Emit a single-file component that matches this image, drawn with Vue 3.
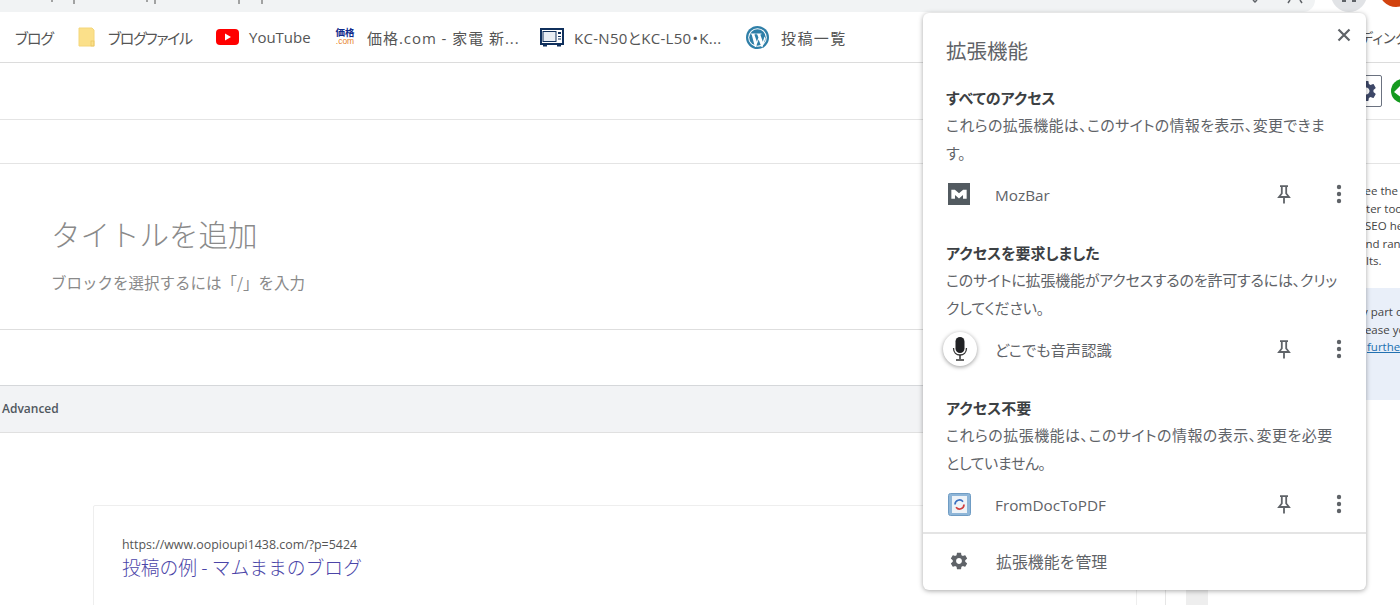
<script setup>
const bookmarks = [
  { label: 'ブログ', kind: 'none', width: 38, ls: -1.2, before: 0, gap: 11 },
  { label: 'ブログファイル', kind: 'file', width: 85, ls: -1.4, before: 25, gap: 12 },
  { label: 'YouTube', kind: 'yt', width: 62, ls: 0, before: 23, gap: 10 },
  { label: '価格.com - 家電 新...', kind: 'kakaku', width: 151, ls: 0.95, before: 23, gap: 11 },
  { label: 'KC-N50とKC-L50・K...', kind: 'oven', width: 150, ls: 0.3, before: 22, gap: 10 },
  { label: '投稿一覧', kind: 'wp', width: 65, ls: 1.4, before: 22, gap: 12 }
]
const sidebarLines = ['see the a', 'nter tool', '. SEO help', 'and rank', 'ults.']
const sections = [
  { title: 'すべてのアクセス', lines: [{ t: 'これらの拡張機能は、このサイトの情報を表示、変更できま', ls: 0.3 }, { t: 'す。', ls: 0 }], name: 'MozBar', kind: 'moz' },
  { title: 'アクセスを要求しました', lines: [{ t: 'このサイトに拡張機能がアクセスするのを許可するには、クリッ', ls: -0.2 }, { t: 'クしてください。', ls: -0.2 }], name: 'どこでも音声認識', kind: 'mic' },
  { title: 'アクセス不要', lines: [{ t: 'これらの拡張機能は、このサイトの情報の表示、変更を必要', ls: 0.45 }, { t: 'としていません。', ls: -0.4 }], name: 'FromDocToPDF', kind: 'pdf' }
]
</script>

<template>
  <div class="page">
    <div class="topstrip">
      <div class="omnibox">
        <svg class="frags" width="1320" height="6" viewBox="0 0 1320 6">
          <path d="M52 0v2M74 0v4M147 0v2M155 0v4M239 0v4M262 0v4" stroke="#777" stroke-width="1.300" />
          <path d="M1253 0l2 2 2-2M1290 0l-2 3M1300 0l2 3" fill="none" stroke="#5f6368" stroke-width="1.500" />
        </svg>
      </div>
      <div class="ext-btn"><i></i><i></i></div>
      <div class="avatar"></div>
    </div>
    <div class="bookmarks">
      <div v-for="b in bookmarks" :key="b.label" class="bm" :style="{ marginLeft: b.before + 'px', gap: b.gap + 'px' }">
        <svg v-if="b.kind === 'file'" class="bmi" width="18" height="20" viewBox="0 0 18 20">
          <path d="M1 1h13l2 2v16H1z" fill="#fbe08a" stroke="#f4d67a" />
          <rect x="13" y="14" width="3" height="5" fill="none" stroke="#e8c460" stroke-width=".7" />
        </svg>
        <svg v-else-if="b.kind === 'yt'" class="bmi" width="23" height="16" viewBox="0 0 23 16">
          <rect width="23" height="16" rx="4" fill="#f00" />
          <path d="M9 4.600 15 8 9 11.400z" fill="#fff" />
        </svg>
        <span v-else-if="b.kind === 'kakaku'" class="kakaku"><b>価格</b><i>.com</i></span>
        <svg v-else-if="b.kind === 'oven'" class="bmi" width="24" height="19" viewBox="0 0 24 19">
          <rect x="1" y="1" width="22" height="15" fill="#fff" stroke="#10305c" stroke-width="2" />
          <rect x="3" y="3.500" width="13" height="10" fill="#e8edf3" stroke="#10305c" />
          <path d="M18 4h3v2h-3zM18 8h3v1h-3zM18 10.500h3v1h-3z" fill="#10305c" />
          <path d="M3 17h4v1.500H3zM17 17h4v1.500h-4z" fill="#10305c" />
        </svg>
        <svg v-else-if="b.kind === 'wp'" class="bmi" width="23" height="23" viewBox="0 0 23 23">
          <circle cx="11.500" cy="11.500" r="11.500" fill="#2f7fa8" />
          <circle cx="11.500" cy="11.500" r="9.300" fill="#fff" />
          <circle cx="11.500" cy="11.500" r="8.300" fill="#2f7fa8" />
          <path d="M4.500 7.500h5.200v.7l-1.300.3 2.500 7.300 1.500-4.400-1.100-2.900-1-.3v-.7h5.200v.7l-1.200.3 2.500 7.200 1.700-5.200 1 1.500-3 9-1 .1-2.900-7.700-2.700 7.700-1 0L5.700 8.500l-1.200-.3z" fill="#fff" />
        </svg>
        <span class="bm-label" :style="{ width: b.width + 'px', letterSpacing: b.ls + 'px' }">{{ b.label }}</span>
      </div>
      <div class="bm-more">ディング</div>
    </div>

    <div class="rows">
      <div class="row row-a">
        <div class="toolbox">
          <svg width="24" height="24" viewBox="0 0 24 24">
            <path fill="#3e4868" fill-rule="evenodd" d="M19.430 12.980c.04-.32.070-.64.070-.98s-.03-.66-.07-.98l2.110-1.650c.19-.15.240-.42.120-.64l-2-3.460c-.12-.22-.39-.3-.61-.22l-2.490 1c-.52-.4-1.080-.73-1.690-.98l-.38-2.650C14.460 2.180 14.250 2 14 2h-4c-.25 0-.46.18-.49.420l-.38 2.650c-.61.25-1.170.59-1.690.98l-2.490-1c-.23-.09-.49 0-.61.22l-2 3.460c-.13.220-.07.490.12.640l2.110 1.650c-.04.320-.07.650-.07.980s.03.660.07.980l-2.110 1.650c-.19.150-.24.420-.12.640l2 3.460c.12.220.39.300.61.220l2.490-1c.52.400 1.080.730 1.690.980l.38 2.650c.03.240.24.420.49.420h4c.25 0 .46-.18.49-.42l.38-2.650c.61-.25 1.170-.59 1.690-.98l2.490 1c.23.090.49 0 .61-.22l2-3.460c.12-.22.07-.49-.12-.64l-2.110-1.650zM12 15.500c-1.930 0-3.500-1.570-3.500-3.500s1.570-3.500 3.500-3.500 3.500 1.570 3.500 3.500-1.570 3.500-3.500 3.500z" />
          </svg>
        </div>
        <span class="green"><svg width="24" height="24" viewBox="0 0 24 24"><path d="M3 13 11 5v6h6v4h-6v4z" fill="#fff" /></svg></span>
      </div>
      <div class="row row-b"></div>
    </div>

    <div class="main">
      <div class="editor">
        <div class="title-area">
          <div class="title">タイトルを追加</div>
          <div class="hint">ブロックを選択するには「/」を入力</div>
        </div>
        <div class="spacer"></div>
        <div class="advanced">Advanced</div>
        <div class="preview-wrap">
          <div class="card">
            <div class="url">https://www.oopioupi1438.com/?p=5424</div>
            <div class="link">投稿の例 - マムままのブログ</div>
          </div>
        </div>
      </div>
      <aside class="side">
        <div class="side-text">
          <div v-for="l in sidebarLines" :key="l">{{ l }}</div>
        </div>
        <div class="notice">
          <div>y part of</div>
          <div>lease you</div>
          <div><span class="further">further</span></div>
        </div>
        <div class="scroll"></div>
      </aside>
    </div>

    <div class="popup">
      <svg class="close" width="14" height="14" viewBox="0 0 14 14">
        <path d="M1.500 1.500l11 11M12.500 1.500l-11 11" stroke="#5f6368" stroke-width="2.200" />
      </svg>
      <div class="pop-title">拡張機能</div>
      <section v-for="s in sections" :key="s.title" class="sec">
        <div class="sec-title">{{ s.title }}</div>
        <div v-for="l in s.lines" :key="l.t" class="sec-desc" :style="{ letterSpacing: l.ls + 'px' }">{{ l.t }}</div>
        <div class="ext">
          <span class="ext-icon">
            <svg v-if="s.kind === 'moz'" class="ico" width="22" height="22" viewBox="0 0 23 23">
              <rect width="23" height="23" fill="#525a60" />
              <path d="M3.500 16.500V7h3.700l4.300 3.800L15.800 7h3.700v9.500h-3.800v-3.900l-4.200 3.500-4.200-3.500v3.900z" fill="#fff" />
            </svg>
            <span v-else-if="s.kind === 'mic'" class="mic">
              <svg width="16" height="26" viewBox="0 0 16 26">
                <rect x="3.500" y="1" width="9" height="16" rx="4.500" fill="#202124" />
                <path d="M1.500 12c0 4.500 3 7 6.500 7s6.500-2.500 6.500-7" fill="none" stroke="#333" stroke-width="1.300" />
                <path d="M8 19v4M4 24h8" stroke="#333" stroke-width="1.500" />
              </svg>
            </span>
            <svg v-else class="ico" width="23" height="23" viewBox="0 0 23 23">
              <rect x=".5" y=".5" width="22" height="22" rx="2" fill="#8fb6d8" stroke="#6f9cc4" />
              <rect x="4" y="3" width="15" height="17" fill="#eef3f8" />
              <path d="M7 11.500a4.500 4.500 0 0 1 8-2.800" fill="none" stroke="#3b6fc0" stroke-width="1.700" />
              <path d="M16 11.500a4.500 4.500 0 0 1-8 2.800" fill="none" stroke="#d23c3c" stroke-width="1.700" />
            </svg>
          </span>
          <span class="ext-name" :class="{ latin: s.kind !== 'mic' }">{{ s.name }}</span>
          <svg class="pin" width="14" height="19" viewBox="0 0 14 19">
            <path d="M3 1.200h8M4.800 1.200v7.300L2 12h10L9.200 8.500V1.200M7 12v6.500" fill="none" stroke="#5f6368" stroke-width="1.800" />
          </svg>
          <svg class="more" width="6" height="20" viewBox="0 0 6 20">
            <circle cx="3" cy="3" r="2.200" fill="#5f6368" /><circle cx="3" cy="10" r="2.200" fill="#5f6368" /><circle cx="3" cy="17" r="2.200" fill="#5f6368" />
          </svg>
        </div>
      </section>
      <div class="manage">
        <span class="ext-icon">
          <svg width="20" height="20" viewBox="0 0 24 24">
            <path fill="#5f6368" d="M19.430 12.980c.04-.32.070-.64.070-.98s-.03-.66-.07-.98l2.110-1.650c.19-.15.240-.42.120-.64l-2-3.460c-.12-.22-.39-.3-.61-.22l-2.490 1c-.52-.4-1.080-.73-1.690-.98l-.38-2.650C14.460 2.180 14.250 2 14 2h-4c-.25 0-.46.18-.49.420l-.38 2.650c-.61.25-1.170.59-1.690.98l-2.490-1c-.23-.09-.49 0-.61.22l-2 3.460c-.13.220-.07.490.12.640l2.110 1.650c-.04.320-.07.650-.07.980s.03.660.07.980l-2.110 1.650c-.19.150-.24.420-.12.640l2 3.460c.12.220.39.300.61.220l2.490-1c.52.400 1.080.730 1.690.980l.38 2.650c.03.240.24.420.49.420h4c.25 0 .46-.18.49-.42l.38-2.650c.61-.25 1.170-.59 1.690-.98l2.490 1c.23.090.49 0 .61-.22l2-3.460c.12-.22.07-.49-.12-.64l-2.110-1.650zM12 15.500c-1.930 0-3.500-1.570-3.500-3.500s1.570-3.500 3.500-3.500 3.500 1.570 3.500 3.500-1.570 3.500-3.500 3.500z" />
          </svg>
        </span>
        <span class="manage-name">拡張機能を管理</span>
      </div>
    </div>
  </div>
</template>

<style scoped>
.page {
  position: relative;
  width: 1400px;
  height: 605px;
  overflow: hidden;
  background: #fff;
  font-family: "Noto Sans CJK JP", "Open Sans", sans-serif;
  font-feature-settings: "palt";
  color: #3c4043;
}
.topstrip { height: 12px; display: flex; position: relative; overflow: hidden; }
.omnibox { width: 1315px; flex: none; height: 12px; background: #f1f3f4; border-bottom-right-radius: 12px; }
.frags { display: block; }
.ext-btn {
  width: 36px; height: 36px; border-radius: 50%; background: #e1e3e6;
  margin: -24px 0 0 16px; flex: none; display: flex; align-items: flex-end; justify-content: center; gap: 6px; padding-bottom: 10px; box-sizing: border-box;
}
.ext-btn i { width: 4px; height: 3px; background: #5f6368; }
.avatar { width: 34px; height: 34px; border-radius: 50%; background: #d2430f; margin: -27px 0 0 12px; flex: none; }
.bookmarks {
  height: 50px;
  display: flex;
  align-items: center;
  padding-left: 15px;
  border-bottom: 1px solid #dcdcdc;
  font-size: 15px;
  color: #555;
}
.bm { display: flex; align-items: center; white-space: nowrap; flex: none; }
.bm-label { font-family: "Open Sans", "Noto Sans CJK JP", sans-serif; display: block; }
.bm-more { margin-left: auto; width: 40px; overflow: hidden; white-space: nowrap; flex: none; font-size: 14px; color: #555; }
.kakaku { width: 22px; display: flex; flex-direction: column; align-items: center; line-height: 9px; }
.kakaku b { font-size: 9.500px; color: #102a8c; }
.kakaku i { font-size: 8.500px; font-style: normal; color: #e8842c; font-family: "Liberation Sans", sans-serif; }
.rows { font-size: 0; }
.row { border-bottom: 1px solid #e4e4e4; }
.row-a { height: 56px; display: flex; align-items: center; justify-content: flex-end; gap: 9px; margin-right: -15px; }
.row-b { height: 43px; }
.toolbox {
  width: 32px; height: 32px; box-sizing: border-box;
  border: 1px solid #6b7280; border-radius: 2px;
  display: flex; align-items: center; justify-content: center;
}
.green { width: 24px; height: 24px; border-radius: 50%; background: #149a1e; display: block; }
.green svg { display: block; }
.main { display: flex; height: 441px; overflow: hidden; }
.editor { width: 1165px; flex: none; border-right: 1px solid #e6e6e6; display: flex; flex-direction: column; }
.title-area { height: 166px; flex: none; border-bottom: 1px solid #dedede; box-sizing: border-box; padding-top: 49px; }
.title { font-size: 29.500px; line-height: 40px; color: #8a8a8a; padding-left: 51px; font-weight: 300; font-feature-settings: normal; }
.hint { font-size: 15.500px; line-height: 22px; color: #8a8a8a; padding-left: 51px; margin-top: 18px; font-feature-settings: normal; }
.spacer { height: 55px; flex: none; }
.advanced {
  height: 48px; flex: none; box-sizing: border-box;
  border-top: 1px solid #d5d7da; border-bottom: 1px solid #e0e0e0;
  background: #f2f3f5;
  padding-left: 2px;
  font: 600 12px/46px "Open Sans", sans-serif; color: #50575e;
}
.preview-wrap { flex: none; height: 180px; padding: 72px 28px 0 93px; box-sizing: border-box; }
.card {
  height: 130px; box-sizing: border-box;
  border: 1px solid #eeeeee; border-radius: 2px;
  padding: 30px 0 0 28px;
}
.url { font: 12.400px/18px "Open Sans", sans-serif; color: #555; }
.link { font-size: 18.800px; line-height: 26px; color: #4b45a8; font-weight: 300; font-feature-settings: normal; }
.side { flex: 1; position: relative; }
.side-text {
  position: absolute; left: 193px; right: 0; top: 18px; overflow: hidden; white-space: nowrap;
  font: 11.500px/17.500px "Open Sans", sans-serif; color: #444;
}
.notice {
  position: absolute; right: 0; top: 124px; width: 222px; height: 112px; box-sizing: border-box;
  background: #e9eff9; font: 11.500px/17.500px "Open Sans", sans-serif; color: #444;
  padding: 15px 0 0 184px; white-space: nowrap; overflow: hidden;
}
.further { color: #2271b1; text-decoration: underline; margin-left: 5px; }
.scroll { position: absolute; left: 20px; top: 300px; width: 22px; height: 141px; background: #eeeeee; }
.popup {
  position: absolute; left: 923px; top: 13px; width: 443px; height: 577px;
  box-sizing: border-box; background: #fff; border-radius: 6px;
  box-shadow: 0 1px 5px rgba(0,0,0,.35);
  padding: 0 0 0 23px;
  display: flex; flex-direction: column;
}
.close { position: absolute; top: 15px; right: 15px; }
.pop-title { font-size: 20.500px; line-height: 28px; margin-top: 23px; color: #5f6368; font-feature-settings: normal; }
.sec { padding-right: 20px; }
.sec-title { font-size: 15px; line-height: 26px; font-weight: 700; color: #3c4043; margin-top: 21px; height: 26px; white-space: nowrap; }
.sec-desc { font-size: 15px; line-height: 28px; color: #5f6368; white-space: nowrap; }
.sec + .sec .sec-title { margin-top: 27px; }
.ext { display: flex; align-items: center; height: 38px; margin-top: 8px; color: #5f6368; font-size: 15px; }
.ext-icon { width: 49px; flex: none; display: flex; align-items: center; }
.ico { margin-left: 2px; }
.ext-name { flex: 1; font-family: "Open Sans", "Noto Sans CJK JP", sans-serif; color: #5f6368; font-size: 15.300px; }
.latin { padding-top: 2px; }
.pin { margin-right: 45px; }
.more { margin-right: 4px; }
.mic {
  width: 34px; height: 34px; border-radius: 50%; margin-left: -3px;
  background: #fff; box-shadow: 0 1px 4px rgba(0,0,0,.4);
  display: flex; align-items: center; justify-content: center;
}
.manage {
  position: absolute; left: 0; right: 0; bottom: 0; height: 58px;
  border-top: 2px solid #e4e4e4; box-sizing: border-box;
  display: flex; align-items: center; padding: 0 0 2px 26px;
}
.manage .ext-icon { width: 47px; }
.manage-name { font-size: 15.900px; color: #5f6368; font-feature-settings: normal; }
</style>

<style>
html, body { margin: 0; background: #fff; }
</style>
